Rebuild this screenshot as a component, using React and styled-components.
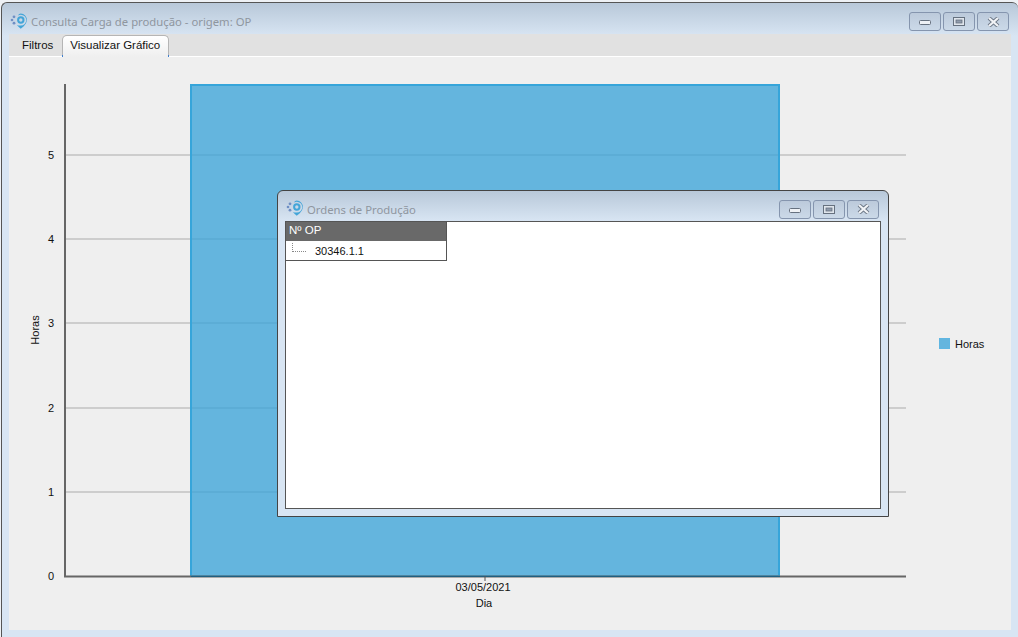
import React from 'react'
import styled, { createGlobalStyle } from 'styled-components'

const GRID_Y = [155, 239, 323, 408, 492]
const TICKS = [
  { label: '5', y: 155 },
  { label: '4', y: 239 },
  { label: '3', y: 323 },
  { label: '2', y: 408 },
  { label: '1', y: 492 },
  { label: '0', y: 576 },
]

function Logo() {
  return (
    <LogoSvg width="18" height="18" viewBox="0 0 18 18">
      <circle cx="2" cy="8" r="1.300" fill="#6f8fc4" />
      <circle cx="4" cy="4.800" r="1.400" fill="#6f8fc4" />
      <circle cx="4" cy="11.200" r="1.400" fill="#6f8fc4" />
      <path d="M10.800 1.500a6.300 6.300 0 0 1 6 6.500c0 3.400-3 6.500-6 8.700-1.400-1-2.800-2.300-3.900-3.800 1.200.6 2.600.8 3.900.7a5.300 5.300 0 0 0 0-10.900c-1 0-2 .3-2.900.8.800-1.300 1.700-2 2.900-2z" fill="#43a5d8" />
      <circle cx="10.800" cy="8" r="2.700" fill="none" stroke="#43a5d8" strokeWidth="2" />
    </LogoSvg>
  )
}

function WindowButtons() {
  return (
    <Buttons>
      <CtrlButton>
        <MinGlyph width="12" height="6" viewBox="0 0 12 6">
          <rect x="0.5" y="0.5" width="11" height="4" rx="1" fill="#eef1f5" stroke="#66717f" />
        </MinGlyph>
      </CtrlButton>
      <CtrlButton>
        <svg width="12" height="9" viewBox="0 0 12 9">
          <rect x="0.5" y="0.5" width="11" height="8" fill="#dfe5ec" stroke="#66717f" />
          <rect x="3" y="3" width="6" height="3" fill="#8f9bac" stroke="#66717f" strokeWidth="0.8" />
        </svg>
      </CtrlButton>
      <CtrlButton>
        <svg width="13" height="10" viewBox="0 0 13 10">
          <path d="M2 1l4.500 4L11 1M2 9l4.500-4L11 9" fill="none" stroke="#6d7887" strokeWidth="4" />
          <path d="M2 1l4.500 4L11 1M2 9l4.500-4L11 9" fill="none" stroke="#f1f3f6" strokeWidth="2.200" />
        </svg>
      </CtrlButton>
    </Buttons>
  )
}

function Chart() {
  return (
    <ChartSvg viewBox="9 57 1002 573" width="1002" height="573">
      {GRID_Y.map((y) => (
        <line key={y} x1="65" x2="906" y1={y} y2={y} stroke="#c2c2c2" strokeWidth="1.5" />
      ))}
      <rect x="191" y="85" width="588" height="491" fill="#38a3d9" fillOpacity="0.76" />
      <rect x="191" y="85" width="588" height="491" fill="none" stroke="#36a5da" strokeWidth="2" />
      <line x1="65" x2="65" y1="84" y2="577" stroke="#666" strokeWidth="2" />
      <line x1="64" x2="906" y1="576.500" y2="576.500" stroke="#666" strokeWidth="2" />
      <line x1="191" x2="780" y1="576.500" y2="576.500" stroke="#1f5f80" strokeWidth="1" />
      <line x1="485" x2="485" y1="576" y2="581" stroke="#555" strokeWidth="1" />
      {TICKS.map((t) => (
        <AxisText key={t.label} x="51" y={t.y + 4} textAnchor="middle">{t.label}</AxisText>
      ))}
      <AxisText x="483" y="591" textAnchor="middle">03/05/2021</AxisText>
      <AxisText x="484" y="607" textAnchor="middle">Dia</AxisText>
      <AxisText x="0" y="0" textAnchor="middle" transform="translate(39 330) rotate(-90)">Horas</AxisText>
      <rect x="939.500" y="338.500" width="10" height="10" fill="#64b5de" stroke="#5fb6e2" />
      <AxisText x="955" y="348">Horas</AxisText>
    </ChartSvg>
  )
}

export default function App() {
  return (
    <>
      <GlobalStyle />
      <MainWindow>
        <TitleBar>
          <Logo />
          <Title>Consulta Carga de produção - origem: OP</Title>
          <WindowButtons />
        </TitleBar>
        <Client>
          <TabStrip>
            <Tab>Filtros</Tab>
            <Tab $active>Visualizar Gráfico</Tab>
          </TabStrip>
          <ChartPanel>
            <Chart />
            <Dialog>
              <DialogBar>
                <Logo />
                <Title>Ordens de Produção</Title>
                <WindowButtons />
              </DialogBar>
              <DialogBody>
                <TreeList>
                  <TreeHeader>Nº OP</TreeHeader>
                  <TreeRow>
                    <TreeGuide />
                    30346.1.1
                  </TreeRow>
                </TreeList>
              </DialogBody>
            </Dialog>
          </ChartPanel>
        </Client>
      </MainWindow>
    </>
  )
}

const GlobalStyle = createGlobalStyle`
  html, body {
    margin: 0;
    padding: 0;
    background: #eef1f5;
    overflow: hidden;
  }
`

const MainWindow = styled.div`
  width: 1017px;
  height: 635px;
  margin: 2px 0 0 1px;
  box-sizing: border-box;
  border-top: 1px solid #555;
  border-left: 1px solid #555;
  border-top-left-radius: 6px;
  border-top-right-radius: 6px;
  background: linear-gradient(#b8c8d9 0, #d8e5f3 33px, #d8e5f3 100%);
  display: flex;
  flex-direction: column;
  font-family: "Liberation Sans", Arial, sans-serif;
`

const TitleBar = styled.div`
  height: 31px;
  flex: none;
  box-sizing: border-box;
  display: flex;
  align-items: center;
  padding: 6px 9px 0 8px;
  gap: 3px;
`

const LogoSvg = styled.svg`
  flex: none;
  margin-top: -2px;
`

const Title = styled.span`
  font-family: "Noto Sans", sans-serif;
  font-size: 11.3px;
  color: #8f969f;
  flex: 1;
`

const Buttons = styled.div`
  display: flex;
  gap: 2px;
`

const CtrlButton = styled.div`
  width: 32px;
  height: 19px;
  box-sizing: border-box;
  border: 1px solid #8595ae;
  border-radius: 3px;
  background: linear-gradient(#bccadb, #cbd9e8);
  display: flex;
  align-items: center;
  justify-content: center;
`

const MinGlyph = styled.svg`
  margin-top: 3px;
`

const Client = styled.div`
  width: 1002px;
  height: 596px;
  margin-left: 7px;
  display: flex;
  flex-direction: column;
`

const TabStrip = styled.div`
  height: 23px;
  flex: none;
  box-sizing: border-box;
  padding: 1px 0 0 2px;
  background: #e1e1e1;
  border-bottom: 1px solid #fff;
  display: flex;
`

const Tab = styled.div`
  position: relative;
  height: ${(p) => (p.$active ? '22px' : '20px')};
  box-sizing: border-box;
  padding: ${(p) => (p.$active ? '3px 8px 0 7px' : '4px 9px 0 11px')};
  font-size: 11.5px;
  color: #111;
  ${(p) =>
    p.$active &&
    `
    border: 1px solid #b5b5b5;
    border-bottom: none;
    border-radius: 5px 5px 0 0;
    background: linear-gradient(#fff, #efefef);
    &::before, &::after {
      content: "";
      position: absolute;
      bottom: 0;
      width: 1px;
      height: 2px;
      background: #3f7fd0;
    }
    &::before { left: -1px; }
    &::after { right: -1px; }
  `}
`

const ChartPanel = styled.div`
  position: relative;
  flex: 1;
  background: #efefef;
`

const ChartSvg = styled.svg`
  display: block;
`

const AxisText = styled.text`
  font-family: "Liberation Sans", Arial, sans-serif;
  font-size: 11px;
  fill: #111;
`

const Dialog = styled.div`
  position: absolute;
  left: 268px;
  top: 133px;
  width: 612px;
  height: 327px;
  box-sizing: border-box;
  border: 1px solid #444;
  border-radius: 6px 6px 0 0;
  background: linear-gradient(#b8c8d9 0, #d8e5f3 30px, #d8e5f3 100%);
  padding: 0 7px 7px 7px;
  display: flex;
  flex-direction: column;
`

const DialogBar = styled.div`
  height: 30px;
  flex: none;
  display: flex;
  align-items: center;
  gap: 3px;
  padding: 6px 2px 0 1px;
  box-sizing: border-box;
`

const DialogBody = styled.div`
  flex: 1;
  box-sizing: border-box;
  border: 1px solid #555;
  background: #fff;
`

const TreeList = styled.div`
  width: 161px;
  box-sizing: border-box;
  border-right: 1px solid #555;
  border-bottom: 1px solid #555;
`

const TreeHeader = styled.div`
  height: 19px;
  box-sizing: border-box;
  padding: 2px 0 0 3px;
  background: #696969;
  color: #fff;
  font-size: 11.5px;
`

const TreeRow = styled.div`
  height: 19px;
  display: flex;
  align-items: center;
  padding-left: 6px;
  font-size: 11px;
  color: #111;
`

const TreeGuide = styled.span`
  width: 13px;
  height: 8px;
  margin: -6px 9px 0 0;
  border-left: 1px dotted #888;
  border-bottom: 1px dotted #888;
`
